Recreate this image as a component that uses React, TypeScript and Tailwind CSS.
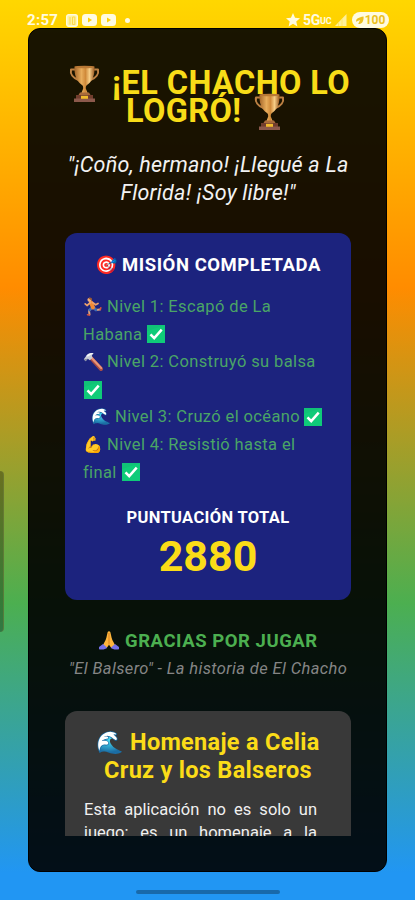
import type { ReactNode } from "react";

function Trophy({ className = "" }: { className?: string }) {
  return (
    <svg viewBox="0 0 31 37" className={`h-[37px] w-[31px] shrink-0 ${className}`}>
      <defs>
        <linearGradient id="cup" x1="0" x2="1" y1="0" y2="0">
          <stop offset="0" stopColor="#a5662a" />
          <stop offset=".35" stopColor="#e8ad5c" />
          <stop offset=".55" stopColor="#d08a3a" />
          <stop offset=".75" stopColor="#f6cd86" />
          <stop offset="1" stopColor="#99571f" />
        </linearGradient>
      </defs>
      <path d="M7 4.500H2c-1 4.500 2 8.500 7.500 10.500M24 4.500h5c1 4.500-2 8.500-7.500 10.500" fill="none" stroke="#bd8143" strokeWidth="2" strokeLinejoin="round" />
      <path d="M5.500 1.500h20c.5 8-2 15-7.500 18.500-1.200 1-1.200 2-1.200 3.500l2 5h-6.600l2-5c0-1.500 0-2.500-1.200-3.500C7.500 16.500 5 9.500 5.500 1.500z" fill="url(#cup)" />
      <ellipse cx="15.500" cy="2" rx="10" ry="1.300" fill="#b97936" />
      <path d="M11 27.500h9l1.500 2.500h-12z" fill="#a96b3b" />
      <path d="M7 30h17v4H7z" fill="#713d2d" />
      <path d="M5 33.500h21V37H5z" fill="#8c594b" />
      <path d="M12 30.800h7v3h-7z" fill="#f2bb2d" />
    </svg>
  );
}

function Check() {
  return (
    <svg viewBox="0 0 18 18" className="h-[18px] w-[18px] shrink-0">
      <rect width="18" height="18" fill="#10c277" />
      <path d="M0 18V6L18 0v18z" fill="#0fd07b" opacity=".6" />
      <path d="M3.500 9.300l3.700 3.900 7.500-8.500" fill="none" stroke="#fff" strokeWidth="2.500" />
    </svg>
  );
}

function Runner() {
  return (
    <svg viewBox="0 0 18 19" className="h-[19px] w-[18px] shrink-0" fill="none" strokeLinecap="round" strokeLinejoin="round">
      <path d="M9.500 10.500L12 13l4-.5" stroke="#e2a27a" strokeWidth="2" />
      <path d="M8 11l-3 2.500 .5 4" stroke="#e2a27a" strokeWidth="2" />
      <path d="M9.500 10.500L12 13M8 11l-2.500 2" stroke="#3f6bb5" strokeWidth="2.600" />
      <path d="M5.500 18l-2-.3M16.300 12.500l.5-1.700" stroke="#d8553d" strokeWidth="1.600" />
      <path d="M7 5.500l2 5" stroke="#f08a35" strokeWidth="4" />
      <path d="M6.500 5.500L3 8.500 1.200 6.800M8.500 5.500l3.200 2.300 2.300-1.300" stroke="#eda16c" strokeWidth="1.700" />
      <circle cx="5.500" cy="2.800" r="2.100" fill="#f0ae7c" />
      <path d="M4.200 1.200C6-.5 9 1 7.800 3.800z" fill="#9b572f" />
    </svg>
  );
}

function Hammer() {
  return (
    <svg viewBox="0 0 20 19" className="h-[19px] w-5 shrink-0">
      <path d="M7.500 5.500L18 17" stroke="#a94c45" strokeWidth="4" strokeLinecap="round" />
      <path d="M8 5.300L18.200 16" stroke="#ea9478" strokeWidth="2.200" strokeLinecap="round" />
      <path d="M.8 7.200L3 4.300C5 1.800 7.300.6 10.500 1.200L8.900 3.500l.5 2.400-2.600 2.300-2-1.500-2.200 2.500z" fill="#c7cbd5" />
      <path d="M3 4.300C5 1.800 7.300.6 10.500 1.200L5 4.500z" fill="#f3f5fa" />
      <path d="M.8 7.200l1.800 2 2.200-2.500" fill="#858ba0" />
    </svg>
  );
}

function Hands() {
  return (
    <svg viewBox="0 0 20 19" className="h-[19px] w-5 shrink-0">
      <path d="M8.700 1C7.600 5 7.600 8 5.300 11.500l-1.500 3 3.700 2.700 2.500-3.500 2.500 3.500 3.700-2.700-1.500-3C12.400 8 12.400 5 11.300 1c-.5-1-2.100-1-2.600 0z" fill="#fdb43b" />
      <path d="M10 2v11.500" stroke="#d57b20" strokeWidth=".9" />
      <path d="M4 13L0 16v2.200c3 .8 6.500.3 8.200-1.400zM16 13l4 3v2.200c-3 .8-6.500.3-8.200-1.400z" fill="#7470e8" />
    </svg>
  );
}

function Emoji({ children, className }: { children: string; className: string }) {
  return (
    <span className={`shrink-0 whitespace-nowrap text-left font-['Noto_Color_Emoji',sans-serif] not-italic tracking-normal ${className}`}>
      {children}
    </span>
  );
}

function Row({ children, className = "" }: { children: ReactNode; className?: string }) {
  return <div className={`flex items-center whitespace-nowrap ${className}`}>{children}</div>;
}

function VideoIcon() {
  return (
    <svg viewBox="0 0 15 12" className="h-3 w-[15px]">
      <rect width="15" height="12" rx="3.500" fill="#fffbe0" />
      <path d="M6 3.500v5L10 6z" fill="#ffd000" />
    </svg>
  );
}

function StatusBar() {
  return (
    <div className="flex h-7 shrink-0 items-center pl-[27px] pr-[26px] pt-3 text-[#fffbe0]">
      <span className="w-[39px] text-[15px] font-bold leading-4 tracking-[0.300px]">2:57</span>
      <svg viewBox="0 0 12 13" className="mr-1 h-[13px] w-3">
        <rect x=".7" y=".7" width="10.600" height="11.600" rx="2" fill="#fff3a0" stroke="#fffbe0" strokeWidth="1.400" />
        <path d="M4 3v7.500M6.500 3h2.300v7.500H6.500z" stroke="#ffd94a" strokeWidth="1" fill="none" />
      </svg>
      <VideoIcon />
      <span className="w-1" />
      <VideoIcon />
      <span className="ml-[9px] h-[5px] w-[5px] rounded-full bg-[#fffbe0]" />
      <svg viewBox="0 0 24 24" className="ml-auto h-[14px] w-[14px]" fill="#fffbe0">
        <path d="M12 0l3.500 8 8.500.8-6.400 5.800L19.500 23 12 18.600 4.500 23l1.900-8.400L0 8.800 8.500 8z" />
      </svg>
      <span className="ml-[3px] text-[14px] font-bold leading-4 tracking-[-0.300px]">5G</span>
      <span className="w-[12px] pt-0.5 text-[9px] font-bold leading-4 tracking-[-0.300px]">UC</span>
      <svg viewBox="0 0 12 12" className="ml-[3px] mr-[5px] h-3 w-3">
        <path d="M0 12L11.500 0v12z" fill="#fff09a" />
        <path d="M3.500 8.500V12M7 5v7" stroke="#ffe45a" strokeWidth=".8" />
      </svg>
      <span className="flex h-4 w-[37px] items-center justify-center rounded-full bg-[#fffbe0] text-[12px] font-bold leading-4 text-[#ecc020]">
        <svg viewBox="0 0 9 9" className="mr-px h-[9px] w-2">
          <path d="M0 6C0 2 3 1 8.500 0 9 6 6 9 2.500 8.500L4.500 4z" fill="#ecc020" />
        </svg>
        100
      </span>
    </div>
  );
}

export default function App() {
  return (
    <div className="relative flex h-[900px] w-[415px] flex-col overflow-hidden bg-[linear-gradient(180deg,#ffd700_0%,#ff8c00_32%,#4caf50_67%,#2196f3_97%)] font-[Roboto,sans-serif]">
      <StatusBar />
      <div className="ml-7 h-[844px] w-[359px] shrink-0 rounded-xl border border-black bg-black/90 px-9 py-[35px]">
        <div className="h-[772px] w-[286px] overflow-hidden">
          <h1 className="pt-[6px] text-[32.500px] font-bold leading-[27.700px] tracking-[0.400px] text-[#f8dc18]">
            <Row className="h-[27.700px] pl-[4px]">
              <Trophy className="mr-[12px]" />
              <span>¡EL CHACHO LO</span>
            </Row>
            <Row className="h-[27.700px] pl-[61px]">
              <span>LOGRÓ!</span>
              <Trophy className="relative ml-[12px]" />
            </Row>
          </h1>

          <div className="mt-[25.500px] text-center text-[21.500px] italic leading-[27.700px] tracking-[0.220px] text-[#f2f2f2]">
            <div className="whitespace-nowrap">"¡Coño, hermano! ¡Llegué a La</div>
            <div className="whitespace-nowrap">Florida! ¡Soy libre!"</div>
          </div>

          <section className="mt-[26.700px] h-[367px] rounded-xl bg-[#1c237e] px-[18px] pt-[18px]">
            <Row className="h-7 pl-3 text-[18.500px] font-bold leading-7 tracking-[0.550px] text-white">
              <Emoji className="w-[27px] text-[18px]">🎯</Emoji>
              <span>MISIÓN COMPLETADA</span>
            </Row>
            <div className="mt-[14px] text-[16.500px] leading-[27.600px] tracking-[0.380px] text-[#4aa566]">
              <Row className="h-[27.600px]">
                <span className="flex w-[24px] pl-px"><Runner /></span>
                <span>Nivel 1: Escapó de La</span>
              </Row>
              <Row className="h-[27.600px] gap-[5px]">
                <span>Habana</span>
                <Check />
              </Row>
              <Row className="h-[27.600px]">
                <span className="flex w-[24px]"><Hammer /></span>
                <span>Nivel 2: Construyó su balsa</span>
              </Row>
              <Row className="h-[27.600px] pl-px">
                <Check />
              </Row>
              <Row className="h-[27.600px] pl-2">
                <Emoji className="w-[24px] text-[16px]">🌊</Emoji>
                <span className="mr-[4px]">Nivel 3: Cruzó el océano</span>
                <Check />
              </Row>
              <Row className="h-[27.600px]">
                <Emoji className="w-[24px] text-[16px]">💪</Emoji>
                <span>Nivel 4: Resistió hasta el</span>
              </Row>
              <Row className="h-[27.600px] gap-[5px]">
                <span>final</span>
                <Check />
              </Row>
            </div>
            <div className="mt-[18px] text-center text-[16.500px] font-bold leading-7 tracking-[0.350px] text-white">PUNTUACIÓN TOTAL</div>
            <div className="mt-[2px] text-center text-[43px] font-bold leading-[44px] text-[#fbdc18]">2880</div>
          </section>

          <Row className="mt-[27px] h-7 pl-[34px] text-[18.500px] font-bold leading-7 tracking-[0.550px] text-[#4caf50]">
            <span className="flex w-[26px]"><Hands /></span>
            <span>GRACIAS POR JUGAR</span>
          </Row>
          <div className="whitespace-nowrap text-center text-[16.500px] italic leading-7 tracking-[0.370px] text-[#858585]">
            "El Balsero" - La historia de El Chacho
          </div>

          <section className="mt-[28px] h-[180px] rounded-xl bg-[#393939] px-[19px] pt-[18px]">
            <h2 className="text-[23.500px] font-bold leading-[27.600px] tracking-[0.300px] text-[#fbdc18]">
              <Row className="h-[27.600px] pl-3">
                <Emoji className="w-[34px] text-[22px]">🌊</Emoji>
                <span>Homenaje a Celia</span>
              </Row>
              <Row className="h-[27.600px] justify-center">Cruz y los Balseros</Row>
            </h2>
            <div className="mt-[14px] w-[233px] text-[16.500px] leading-[23px] text-[#f0f0f0]">
              <p className="whitespace-nowrap [text-align-last:justify]">Esta aplicación no es solo un</p>
              <p className="whitespace-nowrap [text-align-last:justify]">juego: es un homenaje a la</p>
            </div>
          </section>
        </div>
      </div>
      <div className="mx-auto mt-[18px] h-1 w-36 shrink-0 rounded-sm bg-[#1869aa]" />
      <div className="absolute left-0 top-[471px] h-[161px] w-1 rounded-r-sm border-r border-[#6d7b3a]/60 bg-black/30" />
    </div>
  );
}
